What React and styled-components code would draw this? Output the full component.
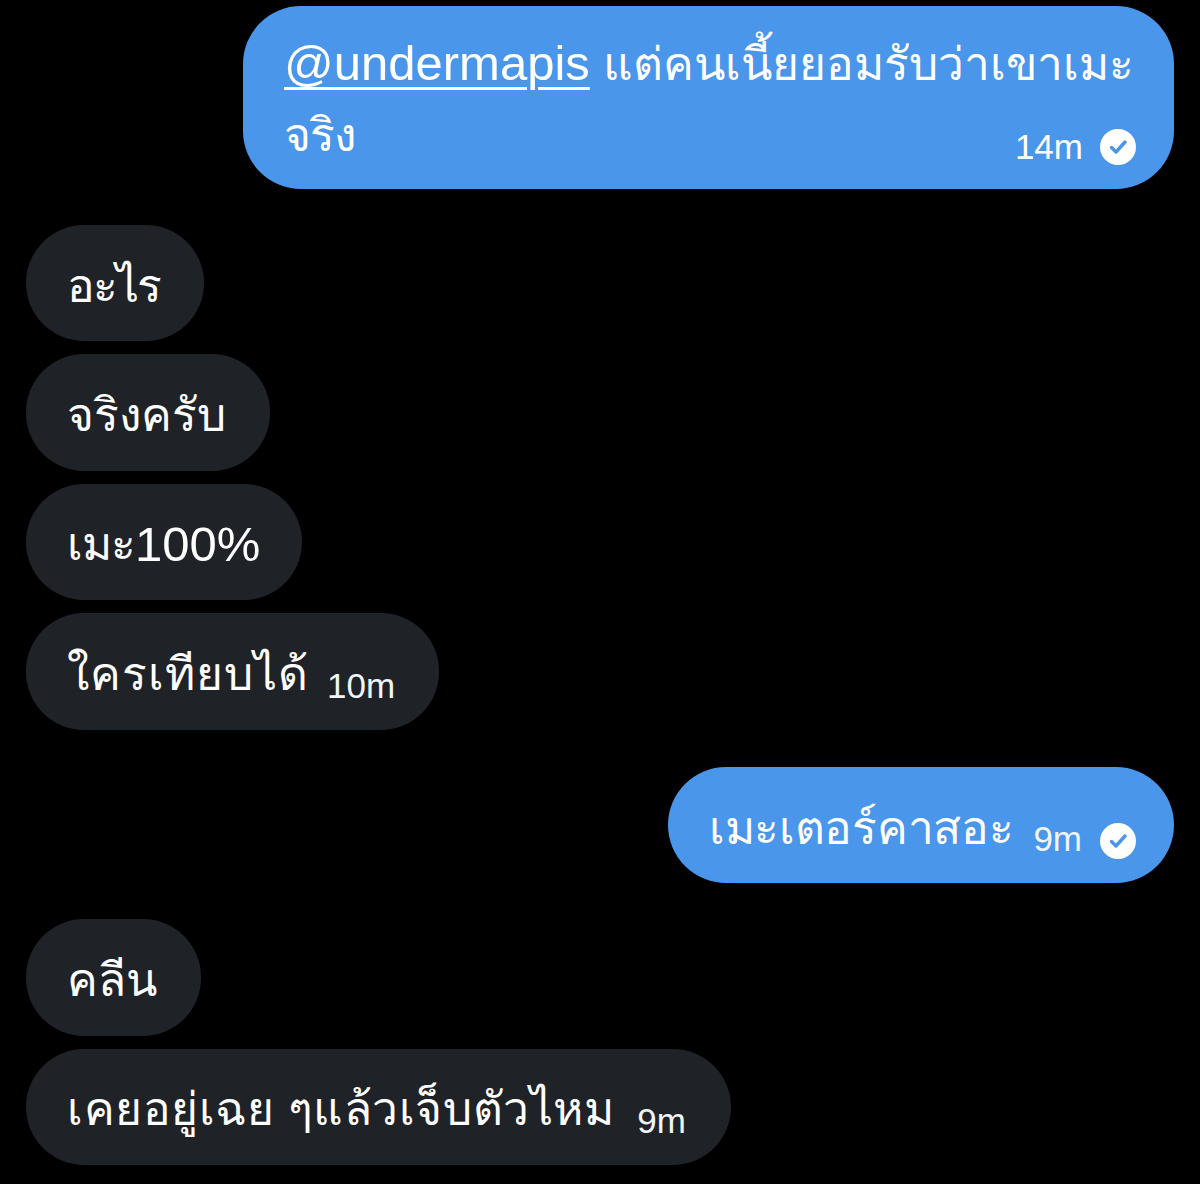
import React from "react";
import styled, { createGlobalStyle } from "styled-components";

const Global = createGlobalStyle`
  html, body { margin: 0; padding: 0; background: #000; }
  body { font-family: "Liberation Sans", "Noto Sans", "DejaVu Sans", sans-serif; }
`;
const Page = styled.main`
  width: 1200px;
  height: 1184px;
  box-sizing: border-box;
  background: #000;
  padding: 6px 26px 0;
  display: flex;
  flex-direction: column;
  overflow: hidden;
`;
const Group = styled.section`
  display: flex;
  flex-direction: column;
  gap: 13px;
  align-items: ${(p) => (p.$mine ? "flex-end" : "flex-start")};
  margin-bottom: ${(p) => p.$after || 36}px;
`;
const Bubble = styled.div`
  box-sizing: border-box;
  height: 116.4px;
  border-radius: 58px;
  padding: 5px ${(p) => p.$right || (p.$mine ? 38 : 44)}px 0 41px;
  display: flex;
  align-items: center;
  color: #fff;
  background: ${(p) => (p.$mine ? "#4a96ea" : "#1f2327")};
  font-size: 46px;
  line-height: 70px;
  white-space: nowrap;
`;
const LongBubble = styled(Bubble)`
  width: 931px;
  height: 183px;
  display: block;
  padding: 22px 38px 0 41px;
  line-height: 71px;
`;
const Line = styled.div`
  display: flex;
  justify-content: space-between;
  align-items: center;
`;
const Thai = styled.span`
  letter-spacing: ${(p) => p.$track || 0}px;
`;
const Mention = styled.span`
  font-size: 49px;
  text-decoration: underline;
  text-decoration-thickness: 3px;
  text-underline-offset: 7px;
`;
const Latin = styled.span`
  font-size: 49px;
`;
const Time = styled.span`
  font-size: 35px;
  line-height: 40px;
  margin-left: ${(p) => p.$gap || 20}px;
  align-self: flex-end;
  padding-bottom: 24px;
  color: #f0f5fb;
`;
const Meta = styled.span`
  display: inline-flex;
  align-items: center;
  gap: 17px;
  font-size: 35px;
  line-height: 40px;
  margin-top: 22px;
`;
const TickSlot = styled.span`
  display: inline-flex;
  margin: 26px 0 0 18px;
`;
const Tick = () => (
  <svg width="36" height="36" viewBox="0 0 36 36" aria-hidden="true">
    <circle cx="18" cy="18" r="18" fill="#fff" />
    <path d="M11.5 18.5l4.5 4.5 9-10" fill="none" stroke="#4a96ea" strokeWidth="3.4" strokeLinecap="round" strokeLinejoin="round" />
  </svg>
);

export default function App() {
  return (
    <Page>
      <Global />
      <Group $mine>
        <LongBubble $mine>
          <div><Mention>@undermapis</Mention> แต่คนเนี้ยยอมรับว่าเขาเมะ</div>
          <Line>
            <Thai $track={-1}>จริง</Thai>
            <Meta>14m <Tick /></Meta>
          </Line>
        </LongBubble>
      </Group>
      <Group $after={37.4}>
        <Bubble><Thai $track={-2}>อะไร</Thai></Bubble>
        <Bubble>จริงครับ</Bubble>
        <Bubble $right={42}><Thai $track={-1}>เมะ</Thai><Latin>100%</Latin></Bubble>
        <Bubble><Thai $track={1}>ใครเทียบได้</Thai><Time $gap={18}>10m</Time></Bubble>
      </Group>
      <Group $mine>
        <Bubble $mine><Thai $track={-0.3}>เมะเตอร์คาสอะ</Thai><Time>9m</Time><TickSlot><Tick /></TickSlot></Bubble>
      </Group>
      <Group>
        <Bubble>คลีน</Bubble>
        <Bubble $right={45}><Thai $track={0.55}>เคยอยู่เฉย ๆแล้วเจ็บตัวไหม</Thai><Time $gap={23}>9m</Time></Bubble>
      </Group>
    </Page>
  );
}
